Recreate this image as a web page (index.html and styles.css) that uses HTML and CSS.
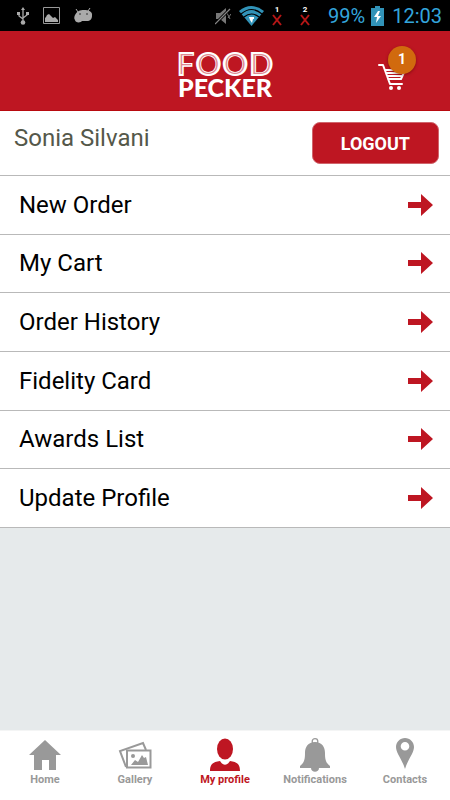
FILE: index.html
```html
<!DOCTYPE html>
<html lang="en">
<head>
<meta charset="utf-8">
<meta name="viewport" content="width=device-width, initial-scale=1">
<title>My profile</title>
<link rel="stylesheet" href="styles.css">
</head>
<body>
<svg width="0" height="0" class="sprite" aria-hidden="true">
  <symbol id="arrow" viewBox="0 0 26 22"><path d="M0 8h13V0l12 11-12 11v-8H0z"/></symbol>
</svg>
<div class="status">
  <div class="status-left">
    <svg width="12" height="18" viewBox="0 0 12 18" fill="none" stroke="#aaa" stroke-width="1.300"><path d="M6 14V2M2 6v3l4 3M10 6v2l-4 3"/><path d="M6 0l2 3H4zM0 5h3v3H0zM9 5h3v3H9z" fill="#aaa" stroke="none"/><circle cx="6" cy="15.500" r="2.300" fill="#aaa" stroke="none"/></svg>
    <svg width="17" height="17" viewBox="0 0 17 17"><path d="M.5.5h16v16H.5z" fill="none" stroke="#999"/><path d="M2 15v-4l1-1 1-2 2-1 2 2 2 2 2-1 3 3v2z" fill="#aaa"/></svg>
    <svg width="19" height="15" viewBox="0 0 19 15"><path d="M2 1l2 3M16 0l-2 3" stroke="#aaa"/><path d="M1 7C3 3 6 2 10 2s9 1 8 6c0 3-2 5-5 5H8c-1 2-7 2-7-1-1-1-1-3 0-5z" fill="#aaa"/><circle cx="6" cy="6" r=".7"/><circle cx="13" cy="6" r=".7"/></svg>
  </div>
  <div class="status-right">
    <svg width="16" height="18" viewBox="0 0 16 18"><path d="M1 6h4l6-5v16l-6-5H1z" fill="#777"/><path d="M12 6l3 6M13 11l3-4" stroke="#777"/><path d="M0 17L15 2" stroke="#000" stroke-width="3"/><path d="M0 17L15 2" stroke="#888" stroke-width="1.2"/></svg>
    <svg width="25" height="20" viewBox="0 0 25 20"><path d="M0 5Q12-5 25 5L12.500 20z" fill="#3193b8"/><path d="M2 8Q12.500-1 23 8M5 11q7.500-6 15 0" fill="none" stroke="#000" stroke-width="1.200"/><path d="M10 11h5v2h-1l-1 4-2-3z" fill="#fff"/></svg>
    <svg class="sim" width="10" height="20" viewBox="0 0 10 20"><text x="5" y="6" class="sim-number">1</text><path d="M1 9l8 10M9 9l-8 10" stroke="#b51616" stroke-width="2"/></svg>
    <svg class="sim" width="10" height="20" viewBox="0 0 10 20"><text x="5" y="6" class="sim-number">2</text><path d="M1 9l8 10M9 9l-8 10" stroke="#b51616" stroke-width="2"/></svg>
    <span class="percent">99%</span>
    <svg width="13" height="20" viewBox="0 0 13 20"><path d="M0 2h4V0h5v2h4v18H0z" fill="#3193b8"/><path d="M7 5l-4 6h3l-1 6 5-7H7l2-5z" fill="#fff"/></svg>
    <span class="clock">12:03</span>
  </div>
</div>
<header class="header">
  <div class="logo">
    <div class="food"><span data-letter="F">F</span><span data-letter="O">O</span><span data-letter="O">O</span><span data-letter="D">D</span></div>
    <div class="pecker">PECKER</div>
  </div>
  <button class="cart" aria-label="Cart, 1 item">
    <svg width="29" height="28" viewBox="0 0 29 28" fill="none" stroke="#fff" stroke-width="2" stroke-linecap="round" stroke-linejoin="round"><path d="M2 2h4l7 19h12M8 7h20l-4 9H11M9 10h17M10 13h15"/><circle cx="14" cy="25" r="2" fill="#fff" stroke="none"/><circle cx="22" cy="25" r="2" fill="#fff" stroke="none"/></svg>
    <span class="badge">1</span>
  </button>
</header>
<main class="main">
  <div class="user">
    <span class="user-name">Sonia Silvani</span>
    <button class="logout">LOGOUT</button>
  </div>
  <nav class="menu">
    <a href="#order">New Order<svg class="arrow"><use href="#arrow"/></svg></a>
    <a href="#cart">My Cart<svg class="arrow"><use href="#arrow"/></svg></a>
    <a href="#history">Order History<svg class="arrow"><use href="#arrow"/></svg></a>
    <a href="#fidelity">Fidelity Card<svg class="arrow"><use href="#arrow"/></svg></a>
    <a href="#awards">Awards List<svg class="arrow"><use href="#arrow"/></svg></a>
    <a href="#profile">Update Profile<svg class="arrow"><use href="#arrow"/></svg></a>
  </nav>
</main>
<nav class="tabs">
  <a href="#home"><svg width="32" height="34" viewBox="0 0 32 34"><path d="M16 2l16 15h-5v15h-7V22h-7v10H5V17H0z"/></svg>Home</a>
  <a href="#gallery"><svg width="34" height="34" viewBox="0 0 34 34"><g fill="none" stroke="#999" stroke-width="2"><path d="M8 29L2 13l23-8 3 7"/><path d="M9 12.500h23.500v17H9z"/></g><circle cx="15" cy="18" r="2"/><path d="M13 27l4-5 3 2 4-7 2 3 2-1 2 8z"/></svg>Gallery</a>
  <a href="#me" class="active" aria-current="page"><svg width="32" height="34" viewBox="0 0 32 34"><ellipse cx="16" cy="11" rx="8" ry="10.500"/><path d="M1 33c0-7 3-9 10-10 3 5 7 5 10 0 7 1 10 3 10 10z"/></svg>My profile</a>
  <a href="#notifications"><svg width="32" height="34" viewBox="0 0 32 34"><circle cx="16" cy="3.500" r="2.800" fill="none" stroke="#999" stroke-width="1.300"/><path d="M16 4c7 0 10 5 10 11 0 7 1 10 5 13v2H20c0 5-8 5-8 0H1v-2c4-3 5-6 5-13C6 9 9 4 16 4z"/></svg>Notifications</a>
  <a href="#contacts"><svg width="18" height="34" viewBox="0 0 18 34"><path fill-rule="evenodd" d="M9 0c5 0 9 4 9 9 0 6-6 12-9 22C6 21 0 15 0 9c0-5 4-9 9-9zm0 4a4.300 4.300 0 100 8.600A4.300 4.300 0 009 4z"/></svg>Contacts</a>
</nav>
</body>
</html>
```
FILE: styles.css
```css
* {
  box-sizing: border-box;
}

body {
  margin: 0;
  min-height: 100vh;
  display: flex;
  flex-direction: column;
  font-family: Roboto, "Liberation Sans", sans-serif;
  background: #e6eaeb;
}

a {
  color: inherit;
  text-decoration: none;
}

button {
  border: 0;
  font-family: inherit;
  cursor: pointer;
}

.sprite {
  position: absolute;
}

.status {
  display: flex;
  justify-content: space-between;
  height: 31px;
  padding: 0 8px 0 17px;
  background: #000;
  color: #33a5dc;
  font-size: 20px;
}

.status-left,
.status-right {
  display: flex;
  align-items: center;
}

.status-left {
  gap: 14px;
}

.status-right svg {
  margin-right: 8px;
}

.status-right .sim {
  margin-right: 18px;
}

.percent {
  margin-right: 6px;
}

.sim-number {
  fill: #fff;
  font-size: 8px;
  font-weight: 700;
  text-anchor: middle;
}

.header {
  display: grid;
  grid-template-columns: 1fr auto 1fr;
  align-items: center;
  height: 80px;
  padding: 6px 44px 0;
  background: #be1622;
  border-bottom: 1px solid #b80a0f;
}

.logo {
  grid-column: 2;
  color: #fff;
  font-family: Lato, sans-serif;
  font-weight: 900;
  text-align: center;
}

.food {
  display: flex;
  justify-content: center;
  font-size: 33px;
  line-height: 26px;
}

.food span {
  position: relative;
}

/* Thin inner line of each letter */
.food span::after {
  content: attr(data-letter);
  position: absolute;
  inset: 0;
  color: #e08a91;
  font-size: 28px;
  font-weight: 300;
  text-align: center;
}

.pecker {
  font-size: 25px;
  line-height: 22px;
}

.cart {
  position: relative;
  justify-self: end;
  width: 29px;
  height: 28px;
  margin-top: 6px;
  padding: 0;
  background: none;
}

.badge {
  position: absolute;
  top: -17px;
  left: 11px;
  width: 28px;
  height: 28px;
  border-radius: 50%;
  background: #d16a0e;
  color: #fff;
  font-size: 14px;
  font-weight: 700;
  line-height: 26px;
  text-align: center;
  box-shadow: 0 1px 3px rgba(80, 0, 0, 0.5);
}

.main {
  flex: 1;
}

.user {
  display: flex;
  justify-content: space-between;
  align-items: flex-start;
  padding: 11px 11px 11px 14px;
  background: #fff;
  border-bottom: 1px solid #b9b9b9;
}

.user-name {
  color: #55584a;
  font-size: 24px;
  line-height: 32px;
}

.logout {
  height: 42px;
  padding: 0 28px;
  border: 1px solid #d0656c;
  border-radius: 8px;
  background: #be1622;
  color: #fff;
  font-size: 18px;
  font-weight: 700;
}

.menu {
  display: grid;
  grid-auto-rows: 1fr;
  min-height: 352px;
}

.menu a {
  display: flex;
  justify-content: space-between;
  align-items: center;
  padding: 0 16px 0 19px;
  background: #fff;
  border-bottom: 1px solid #b9b9b9;
  color: #000;
  font-size: 24px;
}

.arrow {
  width: 26px;
  height: 22px;
  fill: #be1622;
}

.tabs {
  display: grid;
  grid-template-columns: repeat(5, 1fr);
  padding: 7px 0 13px;
  background: #fff;
  border-top: 1px solid #f4f5f5;
  color: #999;
  fill: #999;
  font-size: 11px;
  font-weight: 700;
  line-height: 15px;
}

.tabs a {
  display: flex;
  flex-direction: column;
  align-items: center;
}

.tabs .active {
  color: #be1622;
  fill: #be1622;
}
```
